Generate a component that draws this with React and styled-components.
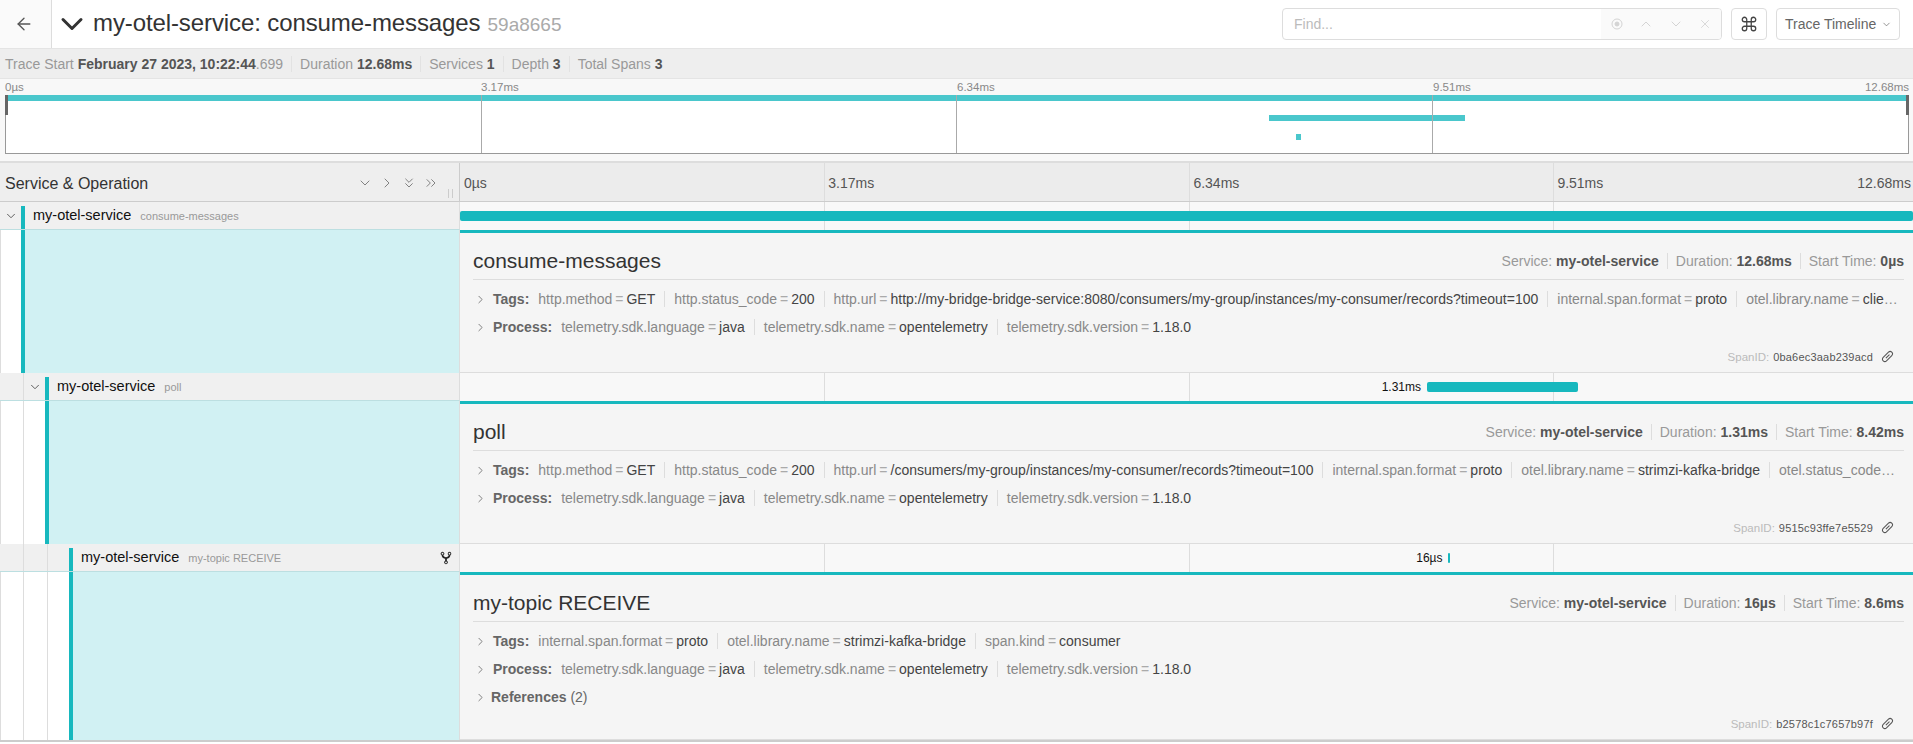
import React from 'react';
import styled, { createGlobalStyle } from 'styled-components';
import {
  ArrowLeft,
  ChevronDown,
  ChevronRight,
  ChevronUp,
  ChevronsDown,
  ChevronsRight,
  Command,
  X,
} from 'lucide-react';
import { IoGitNetwork } from 'react-icons/io5';

const TEAL = '#17b8be';
const LEFT_WIDTH = 460;

const GlobalStyle = createGlobalStyle`
  html, body {
    margin: 0;
    height: 100%;
    overflow: hidden;
    background: #fff;
    font-family: 'Liberation Sans', Arial, sans-serif;
    color: #333;
  }
  * { box-sizing: border-box; }
`;

const Header = styled.header`
  display: flex;
  align-items: center;
  height: 48px;
`;

const BackButton = styled.div`
  display: flex;
  align-items: center;
  justify-content: center;
  width: 52px;
  height: 48px;
  padding-right: 4px;
  background: #fafafa;
  border-right: 1px solid #ddd;
  color: #555;
`;

const TitleGroup = styled.div`
  display: flex;
  align-items: center;
  flex: 1;
  padding-left: 10px;
`;

const TitleChevron = styled(ChevronDown)`
  margin: -8px;
  color: #333;
`;

const TitleText = styled.h1`
  margin: 0 0 0 11px;
  font-size: 24px;
  font-weight: 400;
  line-height: 30px;
  letter-spacing: -0.1px;
  color: #333;
  white-space: nowrap;
`;

const TraceId = styled.small`
  margin-left: 7px;
  font-size: 19px;
  letter-spacing: 0;
  color: #aaa;
`;

const Search = styled.div`
  display: flex;
  width: 440px;
  height: 32px;
  border: 1px solid #ddd;
  border-radius: 4px;
  overflow: hidden;
`;

const SearchInput = styled.div`
  flex: 1;
  padding-left: 11px;
  font-size: 14px;
  line-height: 30px;
  color: #bbb;
`;

const SearchTools = styled.div`
  display: flex;
  align-items: center;
  justify-content: space-around;
  width: 120px;
  padding: 0 2px;
  background: #fafafa;
  color: #d4d4d4;
`;

const CommandButton = styled.div`
  display: flex;
  align-items: center;
  justify-content: center;
  width: 36px;
  height: 32px;
  margin-left: 9px;
  border: 1px solid #ddd;
  border-radius: 4px;
  color: #444;
`;

const ViewSelect = styled.div`
  display: flex;
  align-items: center;
  justify-content: space-between;
  width: 124px;
  height: 32px;
  margin: 0 13px 0 9px;
  padding: 0 7px 0 8px;
  border: 1px solid #ddd;
  border-radius: 4px;
  font-size: 14px;
  color: #666;
`;

const SubHeader = styled.div`
  display: flex;
  align-items: center;
  height: 31px;
  padding-left: 5px;
  background: #eee;
  border-top: 1px solid #e4e4e4;
  border-bottom: 1px solid #e4e4e4;
  font-size: 14px;
  color: #999;
`;

const SubItem = styled.span`
  padding-right: 8px;
  margin-right: 8px;
  border-right: 1px solid #e2e2e2;

  &:last-child {
    border-right: 0;
  }

  b {
    color: #555;
  }
`;

const Overview = styled.section`
  height: 84px;
  background: #f8f8f8;
  border-bottom: 2px solid #ddd;
`;

const OverviewTicks = styled.div`
  display: flex;
  height: 16px;
  padding: 0 4px 0 5px;
  font-size: 11.5px;
  line-height: 17px;
  color: #888;
`;

const OverviewTickLabel = styled.span`
  flex: 0 0 25%;
  ${(p) => p.$last && 'flex: 1; text-align: right; margin-left: -60px;'}
`;

const Minimap = styled.div`
  position: relative;
  height: 59px;
  margin: 0 4px 0 5px;
  background: #fff;
  border-left: 1px solid #999;
  border-right: 1px solid #999;
  border-bottom: 1px solid #999;
`;

const MinimapLine = styled.i`
  position: absolute;
  top: 0;
  bottom: 0;
  left: calc(${(p) => p.$left}% - 1px);
  width: 1px;
  background: #aaa;
`;

const MinimapBar = styled.i`
  position: absolute;
  top: ${(p) => p.$top}px;
  left: ${(p) => p.$left}%;
  width: ${(p) => p.$width}%;
  height: 6px;
  background: #4ac7cc;
`;

const MinimapHandle = styled.i`
  position: absolute;
  top: 0;
  ${(p) => (p.$right ? 'right: -1px' : 'left: -1px')};
  width: 3px;
  height: 20px;
  background: #666;
`;

const Table = styled.section`
  border-bottom: 2px solid #ccc;
`;

const Grid = styled.div`
  display: grid;
  grid-template-columns: ${LEFT_WIDTH}px 1fr;
`;

const HeaderRow = styled(Grid)`
  height: 39px;
  background: #ececec;
  border-bottom: 1px solid #ccc;
`;

const HeaderLeft = styled.div`
  position: relative;
  display: flex;
  align-items: center;
  justify-content: space-between;
  padding: 3px 20px 0 5px;
  background: #eee;
  border-right: 1px solid #ccc;
  font-size: 16px;
  color: #333;
`;

const HeaderTools = styled.div`
  display: flex;
  align-items: center;
  gap: 6px;
  margin-top: -2px;
  color: #666;
`;

const Grip = styled.i`
  position: absolute;
  right: 6px;
  bottom: 3px;
  width: 5px;
  height: 9px;
  border-left: 1px solid #ccc;
  border-right: 1px solid #ccc;
`;

const Timeline = styled.div`
  position: relative;
  height: 100%;
`;

const TickLine = styled.i`
  position: absolute;
  top: 0;
  bottom: 0;
  left: ${(p) => p.$left}%;
  width: 1px;
  background: #ddd;
`;

const TickLabel = styled.span`
  position: absolute;
  top: 12px;
  font-size: 14px;
  color: #555;
  ${(p) => (p.$last ? 'right: 2px;' : `left: calc(${p.$left}% + 4px);`)}
`;

const SpanRowWrap = styled(Grid)`
  height: 28px;
  background: #f8f8f8;
`;

const SpanLeft = styled.div`
  display: flex;
  align-items: stretch;
  height: 28px;
  background: #f0f0f0;
  border-right: 1px solid #ddd;
  border-bottom: 1px solid #bcdfe1;
`;

const Guide = styled.i`
  flex: 0 0 24px;
  border-right: 1px solid #ddd;
`;

const Spacer = styled.i`
  flex: 0 0 21px;
  display: flex;
  align-items: center;
  justify-content: center;
  color: #555;
`;

const ServiceCell = styled.div`
  position: relative;
  flex: 1;
  display: flex;
  align-items: baseline;
  margin-top: 4px;
  padding: 1px 0 0 8px;
  border-left: 4px solid ${TEAL};
`;

const ServiceName = styled.span`
  font-size: 14.5px;
  color: #111;
`;

const OperationName = styled.span`
  margin-left: 9px;
  font-size: 11px;
  color: #999;
`;

const ForkIcon = styled.span`
  position: absolute;
  right: 6px;
  top: 3px;
  color: #222;
`;

const SpanBar = styled.i`
  position: absolute;
  top: 9px;
  left: ${(p) => p.$left}%;
  width: ${(p) => p.$width};
  height: 10px;
  border-radius: 2px;
  background: ${TEAL};
`;

const BarLabel = styled.span`
  position: absolute;
  top: 7px;
  right: calc(${(p) => 100 - p.$left}% + 6px);
  font-size: 12px;
  color: #111;
`;

const DetailWrap = styled(Grid)`
  height: ${(p) => p.$height}px;
`;

const DetailLeft = styled.div`
  display: flex;
  border-right: 1px solid #ddd;
  border-left: 1px solid #ddd;
`;

const DetailGuide = styled.i`
  flex: 0 0 ${(p) => p.$width}px;
  border-right: 1px solid #ddd;
`;

const DetailGap = styled.i`
  flex: 0 0 ${(p) => p.$width}px;
`;

const TealPane = styled.div`
  flex: 1;
  background: #d1f1f3;
  border-left: 4px solid ${TEAL};
`;

const Detail = styled.div`
  display: flex;
  flex-direction: column;
  min-width: 0;
  padding: 0 9px 0 13px;
  background: #f5f5f5;
  border-top: 3px solid ${TEAL};
  border-bottom: 1px solid #ddd;
`;

const DetailHead = styled.div`
  display: flex;
  align-items: center;
  justify-content: space-between;
  flex: none;
  height: 47px;
  margin-bottom: 5px;
  padding-top: 9px;
  border-bottom: 1px solid #ddd;
`;

const DetailTitle = styled.h2`
  margin: 0;
  font-size: 21px;
  font-weight: 400;
  color: #333;
`;

const Meta = styled.div`
  display: flex;
  font-size: 14px;
  color: #999;
`;

const MetaItem = styled.span`
  padding: 0 8px;
  border-right: 1px solid #ddd;

  &:last-child {
    padding-right: 0;
    border-right: 0;
  }

  b {
    color: #555;
  }
`;

const KvRow = styled.div`
  display: flex;
  align-items: center;
  flex: none;
  height: 28px;
  font-size: 14px;
  color: #888;
  min-width: 0;
`;

const RowChevron = styled.span`
  flex: 0 0 ${(p) => (p.$narrow ? 18 : 20)}px;
  display: flex;
  align-items: center;
  padding-left: 1px;
  color: #666;
`;

const KvLabel = styled.b`
  flex: none;
  margin-right: 9px;
  color: #666;
`;

const KvList = styled.div`
  flex: 1;
  min-width: 0;
  padding-right: 6px;
  white-space: nowrap;
  overflow: hidden;
  text-overflow: ellipsis;
`;

const KvItem = styled.span`
  padding-right: 9px;
  margin-right: 9px;
  border-right: 1px solid #ddd;

  &:last-child {
    border-right: 0;
  }
`;

const KvEquals = styled.span`
  margin: 0 3px;
  color: #aaa;
`;

const KvValue = styled.span`
  color: #444;
`;

const RefCount = styled.span`
  font-weight: 400;
  color: #666;
`;

const SpanIdRow = styled.div`
  display: flex;
  align-items: center;
  justify-content: flex-end;
  margin-top: auto;
  height: 26px;
  padding: 0 10px 5px 0;
  font-size: 11.5px;
  color: #bbb;
`;

const SpanIdValue = styled.span`
  margin: 0 8px 0 4px;
  font-size: 11px;
  letter-spacing: 0.2px;
  color: #555;
`;

const minimapTicks = [25, 50, 75];
const tableTicks = [25.07, 50.2, 75.25];

const spans = [
  {
    depth: 0,
    hasChildren: true,
    operation: 'consume-messages',
    bar: { left: 0, width: '100%' },
    duration: '12.68ms',
    start: '0µs',
    height: 143,
    tags: [
      ['http.method', 'GET'],
      ['http.status_code', '200'],
      ['http.url', 'http://my-bridge-bridge-service:8080/consumers/my-group/instances/my-consumer/records?timeout=100'],
      ['internal.span.format', 'proto'],
      ['otel.library.name', 'client-and-more-library-name-values'],
    ],
    spanId: '0ba6ec3aab239acd',
  },
  {
    depth: 1,
    hasChildren: true,
    operation: 'poll',
    bar: { left: 66.55, width: '151px' },
    label: '1.31ms',
    duration: '1.31ms',
    start: '8.42ms',
    height: 143,
    tags: [
      ['http.method', 'GET'],
      ['http.status_code', '200'],
      ['http.url', '/consumers/my-group/instances/my-consumer/records?timeout=100'],
      ['internal.span.format', 'proto'],
      ['otel.library.name', 'strimzi-kafka-bridge'],
      ['otel.status_code', 'UNSET and more values here'],
    ],
    spanId: '9515c93ffe7e5529',
  },
  {
    depth: 2,
    fork: true,
    operation: 'my-topic RECEIVE',
    bar: { left: 68.03, width: '2px' },
    label: '16µs',
    duration: '16µs',
    start: '8.6ms',
    height: 168,
    references: 2,
    tags: [
      ['internal.span.format', 'proto'],
      ['otel.library.name', 'strimzi-kafka-bridge'],
      ['span.kind', 'consumer'],
    ],
    spanId: 'b2578c1c7657b97f',
  },
];

const processTags = [
  ['telemetry.sdk.language', 'java'],
  ['telemetry.sdk.name', 'opentelemetry'],
  ['telemetry.sdk.version', '1.18.0'],
];

const TargetIcon = () => (
  <svg width="14" height="14" viewBox="0 0 14 14" fill="none" stroke="currentColor">
    <circle cx="7" cy="7" r="5" />
    <circle cx="7" cy="7" r="2" fill="currentColor" />
  </svg>
);

const LinkIcon = () => (
  <svg width="13" height="13" viewBox="0 0 14 14" fill="none" stroke="#555" strokeWidth="1.1">
    <g transform="rotate(-45 7 7)">
      <rect x="0.5" y="4.5" width="13" height="5" rx="2.5" />
      <line x1="4.5" y1="7" x2="10" y2="7" />
    </g>
  </svg>
);

const KvLine = ({ label, items }) => (
  <KvRow>
    <RowChevron>
      <ChevronRight size={13} strokeWidth={1.5} />
    </RowChevron>
    <KvLabel>{label}:</KvLabel>
    <KvList>
      {items.map(([key, value]) => (
        <KvItem key={key}>
          {key}
          <KvEquals>=</KvEquals>
          <KvValue>{value}</KvValue>
        </KvItem>
      ))}
    </KvList>
  </KvRow>
);

const SpanRows = ({ span }) => (
  <>
    <SpanRowWrap>
      <SpanLeft>
        {Array.from({ length: span.depth }, (_, i) => (
          <Guide key={i} />
        ))}
        <Spacer>
          {span.hasChildren && <ChevronDown size={14} strokeWidth={1.6} />}
        </Spacer>
        <ServiceCell>
          <ServiceName>my-otel-service</ServiceName>
          <OperationName>{span.operation}</OperationName>
          {span.fork && (
            <ForkIcon>
              <IoGitNetwork size={14} />
            </ForkIcon>
          )}
        </ServiceCell>
      </SpanLeft>
      <Timeline>
        {tableTicks.map((t) => (
          <TickLine key={t} $left={t} />
        ))}
        {span.label && <BarLabel $left={span.bar.left}>{span.label}</BarLabel>}
        <SpanBar $left={span.bar.left} $width={span.bar.width} />
      </Timeline>
    </SpanRowWrap>
    <DetailWrap $height={span.height}>
      <DetailLeft>
        {Array.from({ length: span.depth }, (_, i) => (
          <DetailGuide key={i} $width={i === 0 ? 23 : 24} />
        ))}
        <DetailGap $width={span.depth === 0 ? 20 : 21} />
        <TealPane />
      </DetailLeft>
      <Detail>
        <DetailHead>
          <DetailTitle>{span.operation}</DetailTitle>
          <Meta>
            <MetaItem>
              Service: <b>my-otel-service</b>
            </MetaItem>
            <MetaItem>
              Duration: <b>{span.duration}</b>
            </MetaItem>
            <MetaItem>
              Start Time: <b>{span.start}</b>
            </MetaItem>
          </Meta>
        </DetailHead>
        <KvLine label="Tags" items={span.tags} />
        <KvLine label="Process" items={processTags} />
        {span.references && (
          <KvRow>
            <RowChevron $narrow>
              <ChevronRight size={13} strokeWidth={1.5} />
            </RowChevron>
            <KvLabel>
              References <RefCount>({span.references})</RefCount>
            </KvLabel>
          </KvRow>
        )}
        <SpanIdRow>
          SpanID: <SpanIdValue>{span.spanId}</SpanIdValue>
          <LinkIcon />
        </SpanIdRow>
      </Detail>
    </DetailWrap>
  </>
);

export default function App() {
  return (
    <>
      <GlobalStyle />
      <Header>
        <BackButton>
          <ArrowLeft size={20} strokeWidth={1.6} />
        </BackButton>
        <TitleGroup>
          <TitleChevron size={36} strokeWidth={2} />
          <TitleText>
            my-otel-service: consume-messages
            <TraceId>59a8665</TraceId>
          </TitleText>
        </TitleGroup>
        <Search>
          <SearchInput>Find...</SearchInput>
          <SearchTools>
            <TargetIcon />
            <ChevronUp size={16} strokeWidth={1.5} />
            <ChevronDown size={16} strokeWidth={1.5} />
            <X size={14} strokeWidth={1.5} />
          </SearchTools>
        </Search>
        <CommandButton>
          <Command size={18} strokeWidth={1.7} />
        </CommandButton>
        <ViewSelect>
          Trace Timeline
          <ChevronDown size={11} strokeWidth={1.5} />
        </ViewSelect>
      </Header>
      <SubHeader>
        <SubItem>
          Trace Start <b>February 27 2023, 10:22:44</b>.699
        </SubItem>
        <SubItem>
          Duration <b>12.68ms</b>
        </SubItem>
        <SubItem>
          Services <b>1</b>
        </SubItem>
        <SubItem>
          Depth <b>3</b>
        </SubItem>
        <SubItem>
          Total Spans <b>3</b>
        </SubItem>
      </SubHeader>
      <Overview>
        <OverviewTicks>
          <OverviewTickLabel>0µs</OverviewTickLabel>
          <OverviewTickLabel>3.17ms</OverviewTickLabel>
          <OverviewTickLabel>6.34ms</OverviewTickLabel>
          <OverviewTickLabel>9.51ms</OverviewTickLabel>
          <OverviewTickLabel $last>12.68ms</OverviewTickLabel>
        </OverviewTicks>
        <Minimap>
          <MinimapBar $top={0} $left={0} $width={100} />
          <MinimapBar $top={20} $left={66.4} $width={10.3} />
          <MinimapBar $top={39} $left={67.8} $width={0.3} />
          {minimapTicks.map((t) => (
            <MinimapLine key={t} $left={t} />
          ))}
          <MinimapHandle />
          <MinimapHandle $right />
        </Minimap>
      </Overview>
      <Table>
        <HeaderRow>
          <HeaderLeft>
            Service &amp; Operation
            <HeaderTools>
              <ChevronDown size={16} strokeWidth={1.2} />
              <ChevronRight size={16} strokeWidth={1.2} />
              <ChevronsDown size={16} strokeWidth={1.2} />
              <ChevronsRight size={16} strokeWidth={1.2} />
            </HeaderTools>
            <Grip />
          </HeaderLeft>
          <Timeline>
            <TickLabel $left={0}>0µs</TickLabel>
            {tableTicks.map((t, i) => (
              <React.Fragment key={t}>
                <TickLine $left={t} />
                <TickLabel $left={t}>{['3.17ms', '6.34ms', '9.51ms'][i]}</TickLabel>
              </React.Fragment>
            ))}
            <TickLabel $last>12.68ms</TickLabel>
          </Timeline>
        </HeaderRow>
        {spans.map((span) => (
          <SpanRows key={span.spanId} span={span} />
        ))}
      </Table>
    </>
  );
}
